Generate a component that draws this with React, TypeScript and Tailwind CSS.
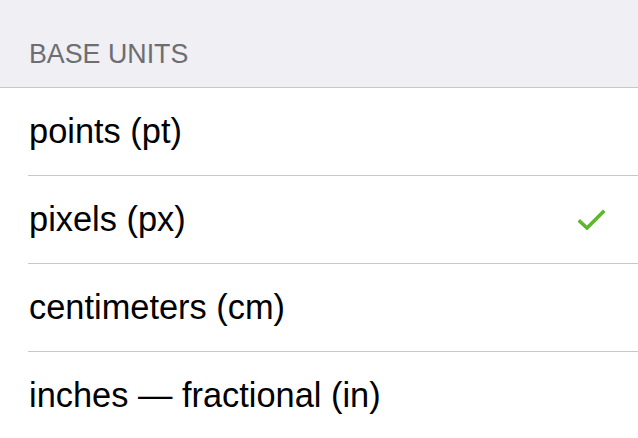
const units = [
  { label: 'points (pt)', selected: false },
  { label: 'pixels (px)', selected: true },
  { label: 'centimeters (cm)', selected: false },
  { label: 'inches — fractional (in)', selected: false },
];

export default function App() {
  return (
    <div className="w-[638px] h-[438px] overflow-hidden bg-white" style={{ fontFamily: '"Liberation Sans", Arial, sans-serif' }}>
      <div className="h-[88px] bg-[#efeff4] border-b border-[#c8c7cc] flex items-end pb-[19px] pl-[29px]">
        <span className="text-[26.8px] leading-none text-[#6d6d72]">BASE UNITS</span>
      </div>
      <ul>
        {units.map((unit) => (
          <li key={unit.label} className="pl-[28px]">
            <div className="h-[88px] flex items-center justify-between pr-[33px] border-b border-[#c8c7cc]">
              <span className="text-[34.4px] text-black pl-px">{unit.label}</span>
              {unit.selected && (
                <svg width="27" height="21" viewBox="0 0 27 21" fill="none">
                  <path d="M2 12.5 L9 19 L25 3" stroke="#5cb82e" strokeWidth="3.6" strokeLinecap="square" />
                </svg>
              )}
            </div>
          </li>
        ))}
      </ul>
    </div>
  );
}
